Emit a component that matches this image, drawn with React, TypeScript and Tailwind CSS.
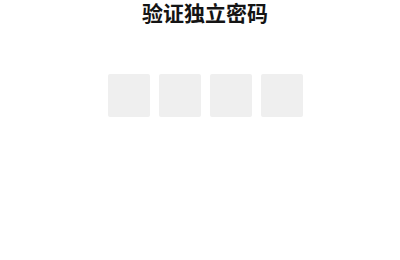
export default function App() {
  const cells = [0, 1, 2, 3];
  return (
    <div
      className="h-[260px] w-[400px] bg-white pl-[10px]"
      style={{ fontFamily: '"Noto Sans CJK SC", "Noto Sans", sans-serif' }}
    >
      <h1 className="text-center text-[21px] font-bold leading-[25px] text-[#141414]">
        验证独立密码
      </h1>
      <div className="mt-[49px] flex justify-center gap-[9px]">
        {cells.map((i) => (
          <div key={i} className="h-[43px] w-[42px] rounded-[2px] bg-[#efefef]" />
        ))}
      </div>
    </div>
  );
}
